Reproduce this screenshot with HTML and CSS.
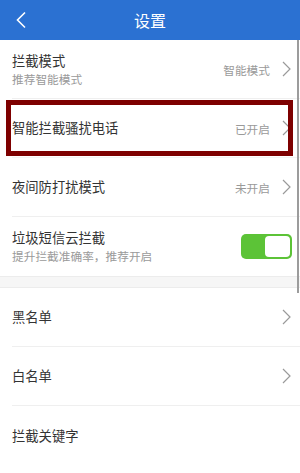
FILE: index.html
```html
<!DOCTYPE html>
<html lang="zh-CN">
<head>
<meta charset="utf-8">
<title>设置</title>
<link rel="stylesheet" href="styles.css">
</head>
<body>
<div class="screen">
  <header class="topbar">
    <span class="back">
      <svg width="12" height="18" viewBox="0 0 12 18"><polyline points="10,1.5 2.5,9 10,16.5" fill="none" stroke="#fff" stroke-width="1.6"/></svg>
    </span>
    <h1 class="title">设置</h1>
    <span></span>
  </header>

  <section class="group">
    <div class="row">
      <div class="texts">
        <div class="label">拦截模式</div>
        <div class="sub">推荐智能模式</div>
      </div>
      <span class="value">智能模式</span>
      <svg class="chev" width="9" height="16" viewBox="0 0 9 16"><polyline points="1,1 8,8 1,15" fill="none" stroke="#9a9a9a" stroke-width="1.2"/></svg>
    </div>
    <div class="row highlight">
      <div class="texts">
        <div class="label">智能拦截骚扰电话</div>
      </div>
      <span class="value">已开启</span>
      <svg class="chev" width="9" height="16" viewBox="0 0 9 16"><polyline points="1,1 8,8 1,15" fill="none" stroke="#9a9a9a" stroke-width="1.2"/></svg>
    </div>
    <div class="row">
      <div class="texts">
        <div class="label">夜间防打扰模式</div>
      </div>
      <span class="value">未开启</span>
      <svg class="chev" width="9" height="16" viewBox="0 0 9 16"><polyline points="1,1 8,8 1,15" fill="none" stroke="#9a9a9a" stroke-width="1.2"/></svg>
    </div>
    <div class="row last">
      <div class="texts">
        <div class="label">垃圾短信云拦截</div>
        <div class="sub">提升拦截准确率，推荐开启</div>
      </div>
      <span class="toggle"><span class="knob"></span></span>
    </div>
  </section>

  <div class="gap"></div>

  <section class="group">
    <div class="row">
      <div class="texts"><div class="label">黑名单</div></div>
      <svg class="chev" width="9" height="16" viewBox="0 0 9 16"><polyline points="1,1 8,8 1,15" fill="none" stroke="#9a9a9a" stroke-width="1.2"/></svg>
    </div>
    <div class="row">
      <div class="texts"><div class="label">白名单</div></div>
      <svg class="chev" width="9" height="16" viewBox="0 0 9 16"><polyline points="1,1 8,8 1,15" fill="none" stroke="#9a9a9a" stroke-width="1.2"/></svg>
    </div>
    <div class="row last">
      <div class="texts"><div class="label">拦截关键字</div></div>
    </div>
  </section>

  <div class="scrollbar"></div>
</div>
</body>
</html>
```

FILE: styles.css
```css
* { box-sizing: border-box; }
html, body {
  margin: 0;
  padding: 0;
  background: #fff;
}
body {
  font-family: "Noto Sans CJK SC", "Noto Sans", sans-serif;
  color: #333;
}
.screen {
  position: relative;
  width: 300px;
  height: 473px;
  overflow: hidden;
  background: #fff;
}
.topbar {
  height: 40px;
  background: #2b71d2;
  display: grid;
  grid-template-columns: 44px 1fr 44px;
  align-items: center;
}
.back {
  display: flex;
  align-items: center;
  padding-left: 15px;
}
.back svg { display: block; }
.title {
  margin: 0;
  text-align: center;
  color: #fff;
  font-size: 16px;
  font-weight: normal;
  line-height: 1;
}
.group {
  display: flex;
  flex-direction: column;
}
.row {
  position: relative;
  height: 59px;
  margin-left: 12px;
  padding-right: 9px;
  display: flex;
  align-items: center;
  border-bottom: 1px solid #efefef;
}
.row.last { border-bottom: none; }
.texts {
  flex: 1;
  display: flex;
  flex-direction: column;
  gap: 2px;
}
.label {
  font-size: 13.3px;
  line-height: 16px;
  color: #333;
}
.sub {
  font-size: 11.7px;
  line-height: 15px;
  color: #9a9a9a;
}
.value {
  font-size: 11.7px;
  color: #9a9a9a;
  margin-right: 12px;
}
.chev { display: block; }
.highlight { border-bottom-color: #f4f4f4; }
.highlight::after {
  content: "";
  position: absolute;
  left: -6px;
  right: 7px;
  top: 1px;
  bottom: 1px;
  border: 5px solid #7e0000;
  pointer-events: none;
}
.toggle {
  width: 51px;
  height: 25px;
  border-radius: 5px;
  background: #5cc337;
  padding: 2px;
  display: flex;
  justify-content: flex-end;
  margin-right: -1px;
}
.knob {
  width: 25px;
  height: 21px;
  background: #fff;
  border-radius: 4px;
}
.gap {
  height: 12px;
  background: #f6f6f6;
  border-top: 1px solid #ececec;
  border-bottom: 1px solid #ececec;
}
.scrollbar {
  position: absolute;
  right: 1px;
  top: 40px;
  width: 2px;
  height: 253px;
  background: #9c9c9c;
}
```
